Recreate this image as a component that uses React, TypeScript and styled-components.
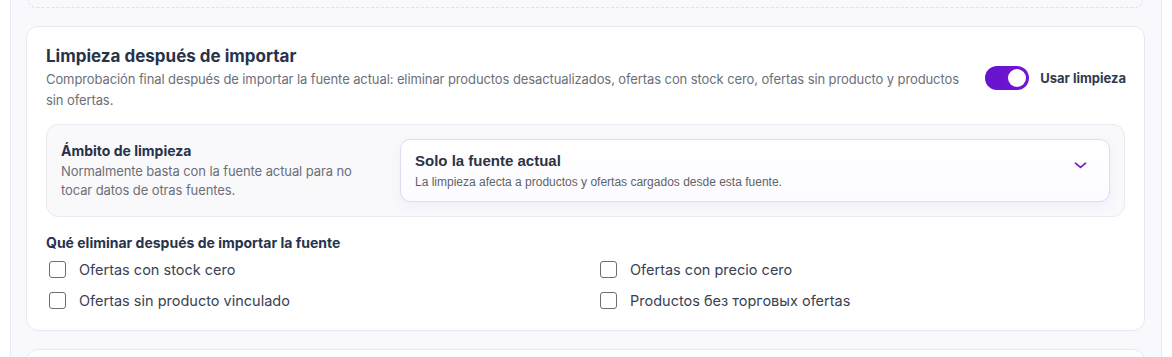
import { useState } from 'react'
import styled, { createGlobalStyle } from 'styled-components'

const GlobalStyle = createGlobalStyle`
    html, body {
        margin: 0;
        padding: 0;
        background: #ffffff;
        font-family: Inter, "Noto Sans", "Liberation Sans", sans-serif;
        -webkit-font-smoothing: antialiased;
    }
`

const cleanupOptions = [
    { id: 'stock', label: 'Ofertas con stock cero' },
    { id: 'price', label: 'Ofertas con precio cero' },
    { id: 'orphan', label: 'Ofertas sin producto vinculado' },
    { id: 'empty', label: 'Productos без торговых ofertas' },
]

const App = () => {
    const [enabled, setEnabled] = useState(true)
    const [checked, setChecked] = useState<Record<string, boolean>>({})

    return (
        <>
            <GlobalStyle />
            <PageST>
                <PanelST>
                    <PrevCardST />
                    <CardST>
                        <HeaderRowST>
                            <HeaderTextST>
                                <TitleST>Limpieza después de importar</TitleST>
                                <DescriptionST>
                                    Comprobación final después de importar la fuente actual: eliminar productos desactualizados, ofertas con stock cero, ofertas sin producto y productos sin ofertas.
                                </DescriptionST>
                            </HeaderTextST>
                            <ToggleLabelST onClick={() => setEnabled(!enabled)}>
                                <ToggleTrackST $on={enabled}>
                                    <ToggleKnobST $on={enabled} />
                                </ToggleTrackST>
                                Usar limpieza
                            </ToggleLabelST>
                        </HeaderRowST>

                        <ScopeBoxST>
                            <ScopeInfoST>
                                <ScopeTitleST>Ámbito de limpieza</ScopeTitleST>
                                <ScopeHintST>Normalmente basta con la fuente actual para no tocar datos de otras fuentes.</ScopeHintST>
                            </ScopeInfoST>
                            <SelectST>
                                <SelectTextST>
                                    <SelectValueST>Solo la fuente actual</SelectValueST>
                                    <SelectHintST>La limpieza afecta a productos y ofertas cargados desde esta fuente.</SelectHintST>
                                </SelectTextST>
                                <svg width="14" height="14" viewBox="0 0 14 14" fill="none">
                                    <path d="M1.5 4.5 L7 9 L12.5 4.5" stroke="#6a1fc4" strokeWidth="1.8" strokeLinecap="round" strokeLinejoin="round" />
                                </svg>
                            </SelectST>
                        </ScopeBoxST>

                        <SubtitleST>Qué eliminar después de importar la fuente</SubtitleST>
                        <OptionsGridST>
                            {cleanupOptions.map((item) =>
                                <OptionST key={item.id}>
                                    <CheckboxST
                                        type="checkbox"
                                        checked={!!checked[item.id]}
                                        onChange={() => setChecked({ ...checked, [item.id]: !checked[item.id] })}
                                    />
                                    {item.label}
                                </OptionST>
                            )}
                        </OptionsGridST>
                    </CardST>
                    <NextCardST />
                </PanelST>
            </PageST>
        </>
    )
}

const PageST = styled.div`
    padding-left: 10px;
    width: 1152px;
    height: 357px;
    overflow: hidden;
`

const PanelST = styled.div`
    display: flex;
    flex-direction: column;
    gap: 18px;
    height: 100%;
    padding: 0 16px 0 15px;
    background: #f9f9fd;
    border-left: 1px solid #ebe8f4;
    border-right: 1px solid #ebe8f4;
`

const PrevCardST = styled.div`
    height: 7px;
    margin: 0 2px;
    border: 1px dashed #e1e0ec;
    border-top: none;
    border-radius: 0 0 12px 12px;
    flex-shrink: 0;
`

const CardST = styled.section`
    display: flex;
    flex-direction: column;
    padding: 18px 19px 19px;
    background: #ffffff;
    border: 1px solid #e9e6f3;
    border-radius: 12px;
    flex-shrink: 0;
`

const NextCardST = styled(CardST)`
    height: 40px;
    padding: 0;
    border-radius: 12px 12px 0 0;
`

const HeaderRowST = styled.div`
    display: flex;
    align-items: center;
    gap: 20px;
`

const HeaderTextST = styled.div`
    flex: 1;
`

const TitleST = styled.h2`
    margin: 0 0 2px;
    font-size: 17px;
    font-weight: 700;
    line-height: 22px;
    color: #27334a;
`

const DescriptionST = styled.p`
    margin: 0;
    font-size: 13px;
    line-height: 21px;
    letter-spacing: -0.1px;
    color: #6b6f78;
`

const ToggleLabelST = styled.label`
    display: flex;
    align-items: center;
    gap: 11px;
    margin-right: -1px;
    font-size: 13px;
    font-weight: 700;
    color: #2f3a4f;
    cursor: pointer;
    white-space: nowrap;
`

const ToggleTrackST = styled.span<{ $on: boolean }>`
    display: flex;
    align-items: center;
    width: 44px;
    height: 24px;
    padding: 0 3px;
    box-sizing: border-box;
    border-radius: 12px;
    background: ${({ $on }) => $on ? 'linear-gradient(90deg, #6513cf, #7416cf)' : '#d8d8e0'};
    justify-content: ${({ $on }) => $on ? 'flex-end' : 'flex-start'};
`

const ToggleKnobST = styled.span<{ $on: boolean }>`
    width: 18px;
    height: 18px;
    border-radius: 50%;
    background: #ffffff;
`

const ScopeBoxST = styled.div`
    display: flex;
    align-items: center;
    gap: 34px;
    margin-top: 13px;
    padding: 14px;
    background: #f9f9fc;
    border: 1px solid #ebeaf2;
    border-radius: 12px;
`

const ScopeInfoST = styled.div`
    width: 300px;
    flex-shrink: 0;
    margin-right: 5px;
`

const ScopeTitleST = styled.h3`
    margin: 0 0 2px;
    font-size: 14px;
    font-weight: 700;
    line-height: 19px;
    color: #27334a;
`

const ScopeHintST = styled.p`
    margin: 0;
    font-size: 13px;
    line-height: 19px;
    letter-spacing: -0.1px;
    color: #6b6f78;
`

const SelectST = styled.div`
    flex: 1;
    display: flex;
    align-items: center;
    justify-content: space-between;
    padding: 12px 22px 12px 14px;
    background: linear-gradient(180deg, #ffffff, #fcfbff);
    border: 1px solid #e2d9f3;
    border-radius: 10px;
    box-shadow: 0 4px 12px rgba(110, 80, 200, 0.07);
    cursor: pointer;

    svg {
        width: 13px;
        height: 13px;
        margin-top: -10px;
    }
`

const SelectTextST = styled.div`
    display: flex;
    flex-direction: column;
    gap: 5px;
    font-family: "Liberation Sans", Arial, sans-serif;
`

const SelectValueST = styled.span`
    font-size: 15px;
    font-weight: 700;
    line-height: 18px;
    color: #2a3346;
`

const SelectHintST = styled.span`
    font-size: 12px;
    line-height: 14px;
    color: #5f636c;
`

const SubtitleST = styled.h4`
    margin: 17px 0 7px;
    font-size: 14px;
    font-weight: 700;
    line-height: 18px;
    color: #27334a;
`

const OptionsGridST = styled.div`
    display: grid;
    grid-template-columns: 551px 1fr;
    row-gap: 10px;
    padding-left: 3px;
`

const OptionST = styled.label`
    display: flex;
    align-items: center;
    gap: 13px;
    font-size: 14.5px;
    line-height: 21px;
    color: #384253;
    cursor: pointer;
`

const CheckboxST = styled.input`
    appearance: none;
    margin: 0;
    width: 17px;
    height: 17px;
    border: 1.3px solid #6d6d74;
    border-radius: 3px;
    background: #ffffff;
    cursor: pointer;
    &:checked {
        background: #6a14cf;
        border-color: #6a14cf;
    }
`

export default App
